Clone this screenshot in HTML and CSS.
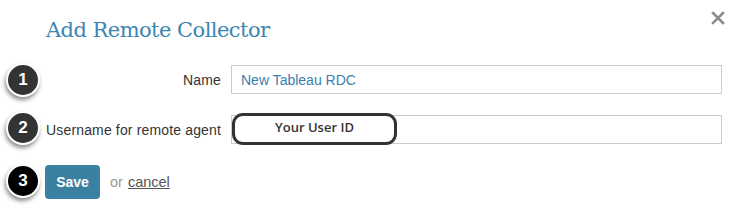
FILE: index.html
```html
<!DOCTYPE html>
<html lang="en">
<head>
    <meta charset="UTF-8">
    <title>Add Remote Collector</title>
    <link rel="stylesheet" href="styles.css">
</head>
<body>
<div class="dialog">
    <div class="dialog-header">
        <h2 class="dialog-title">Add Remote Collector</h2>
        <svg class="close" width="14" height="14" viewBox="0 0 14 14">
            <path d="M2 2 L12 12 M12 2 L2 12" stroke="#8c8c8c" stroke-width="2.6" stroke-linecap="square"/>
        </svg>
    </div>
    <div class="collectorForm">
        <span class="step step1">1</span>
        <span class="step step2">2</span>
        <span class="step step3">3</span>

        <label for="name">Name</label>
        <input type="text" id="name" name="name" value="New Tableau RDC">

        <label for="username">Username for remote agent</label>
        <div class="inputWrap">
            <input type="text" id="username" name="username">
            <span class="callout">Your User ID</span>
        </div>

        <div class="buttonRow">
            <button class="saveButton">Save</button>
            <span class="or">or</span>
            <a class="cancel" href="#">cancel</a>
        </div>
    </div>
</div>
</body>
</html>
```

FILE: styles.css
```css
body {
    margin: 0;
    padding: 0;
    background-color: #fff;
    font-family: "Liberation Sans", Arial, sans-serif;
    color: #333;
}
.dialog {
    width: 742px;
    height: 219px;
}
.dialog-header {
    display: flex;
    justify-content: space-between;
    align-items: flex-start;
    padding: 18px 17px 0 46px;
    height: 51px;
    box-sizing: border-box;
}
.dialog-title {
    margin: 0;
    font-family: "DejaVu Serif", serif;
    font-weight: normal;
    font-size: 21px;
    letter-spacing: -0.55px;
    color: #3d85b3;
}
.close {
    margin-top: -7px;
}
.collectorForm {
    position: relative;
    display: grid;
    grid-template-columns: 176px 1fr;
    column-gap: 10px;
    row-gap: 21px;
    align-items: center;
    padding: 14px 20px 0 45px;
}
.collectorForm label {
    text-align: right;
    font-size: 14px;
    letter-spacing: 0.15px;
    color: #333;
    white-space: nowrap;
}
input[type="text"] {
    box-sizing: border-box;
    width: 100%;
    height: 29px;
    padding: 0 9px;
    border: 1px solid #ccc;
    border-radius: 0;
    font-family: "Liberation Sans", Arial, sans-serif;
    font-size: 14px;
    color: #3a7fb0;
    outline: none;
}
.inputWrap {
    position: relative;
}
.callout {
    position: absolute;
    left: 1px;
    top: -2px;
    width: 165px;
    height: 32px;
    box-sizing: border-box;
    border: 3px solid #333;
    border-radius: 11px;
    background-color: #fff;
    text-align: center;
    font-family: "Open Sans", sans-serif;
    font-size: 13px;
    font-weight: 600;
    line-height: 23px;
    color: #333;
}
.buttonRow {
    grid-column: 1 / 3;
    display: flex;
    align-items: center;
    gap: 10px;
}
.saveButton {
    width: 55px;
    height: 34px;
    border: none;
    border-radius: 4px;
    background-color: #3a81a1;
    color: #fff;
    font-family: "Liberation Sans", Arial, sans-serif;
    font-size: 14px;
    font-weight: bold;
}
.or {
    color: #999;
    font-size: 14.5px;
}
.cancel {
    color: #555;
    font-size: 14.5px;
    margin-left: -5px;
}
.step {
    position: absolute;
    left: 6px;
    width: 30px;
    height: 30px;
    border-radius: 50%;
    background-color: #333;
    border: 2px solid #fff;
    box-shadow: -1px 3px 4px rgba(0, 0, 0, 0.45);
    color: #fff;
    font-size: 17px;
    font-weight: bold;
    line-height: 30px;
    text-align: center;
}
.step1 { top: 12px; }
.step2 { top: 60px; }
.step3 { top: 113px; background-color: #000; }
```
